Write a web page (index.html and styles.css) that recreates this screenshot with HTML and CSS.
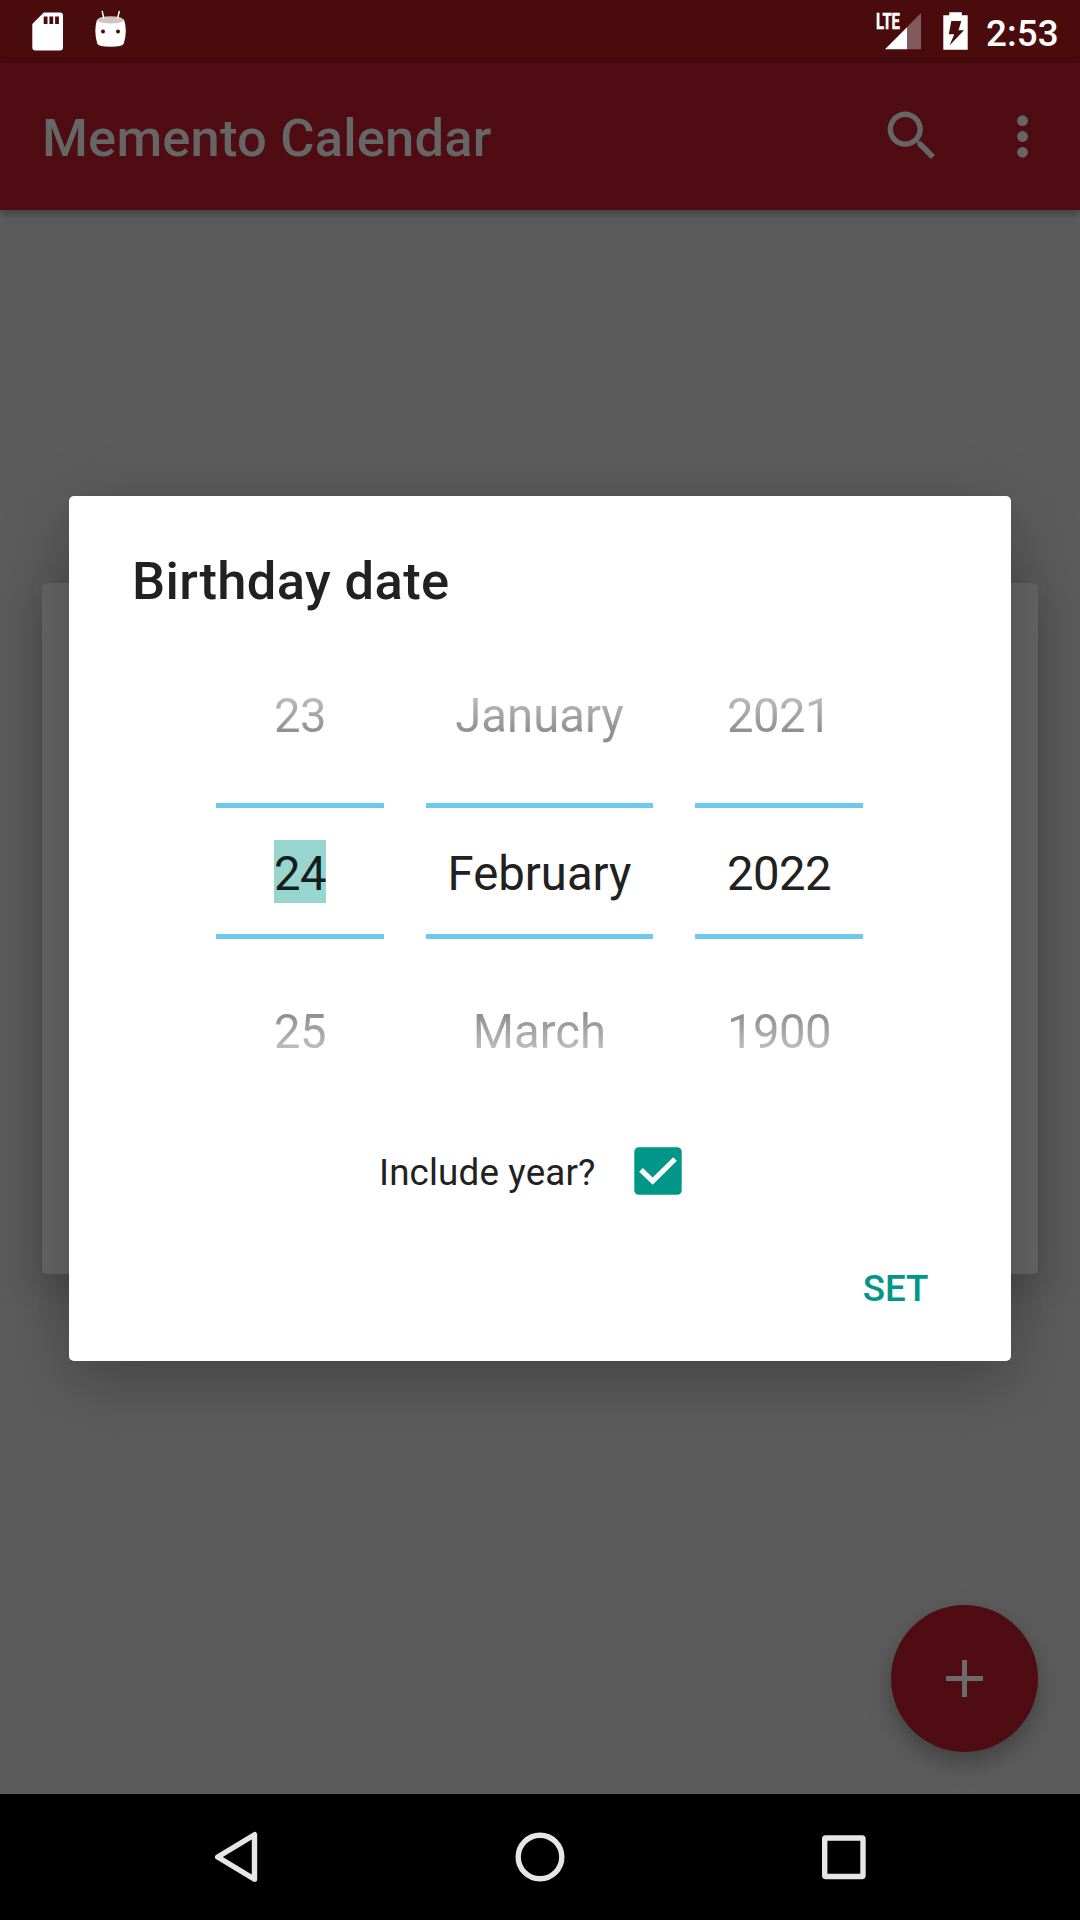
FILE: index.html
```html
<!DOCTYPE html>
<html lang="en">
<head>
<meta charset="utf-8">
<title>Memento Calendar</title>
<link rel="stylesheet" href="styles.css">
</head>
<body>
<div class="screen">
  <header class="status-bar">
    <svg class="status-icons" width="140" height="63" viewBox="0 0 140 63">
      <path fill="#fff" fill-rule="evenodd" d="M43.8 12.4H60a3 3 0 0 1 3 3V47.6a3 3 0 0 1-3 3H35.300a3 3 0 0 1-3-3V24zM43.700 16.500V24H47.500V16.500zM49.400 16.500V24H53.200V16.500zM55.100 16.500V24H58.900V16.500z"/>
      <path fill="#fff" d="M97 19.500Q110.300 26 124 19.500Q127.800 31 123.800 43.500Q122.500 46.800 110.500 46.800Q98.500 46.800 97.200 43.500Q93.500 31 97 19.500z"/>
      <ellipse cx="110.500" cy="19.900" rx="12.800" ry="3.600" fill="#d2c2c2"/>
      <path d="M102.300 11.600L103.700 18M119.200 11.600L117.700 18" stroke="#fff" stroke-width="1.500" stroke-linecap="round"/>
      <circle cx="103" cy="31.500" r="2" fill="#4a0b0d"/>
      <circle cx="118" cy="31.500" r="2" fill="#4a0b0d"/>
    </svg>
    <svg class="status-icons status-right" width="104" height="63" viewBox="870 0 104 63">
      <text class="network" x="876" y="29" textLength="24" lengthAdjust="spacingAndGlyphs">LTE</text>
      <path fill="#835a5c" d="M907 27L921 13V49.300H907z"/>
      <path fill="#fff" d="M885 49.300L907 27.300V49.300z"/>
      <path fill="#fff" fill-rule="evenodd" d="M943.300 15.200H949.300V12.300H961.800V15.200H967.700V49.700H943.300zM951.300 21L948.800 34.200H954.300L949.500 45.600L964 30.200H958.500L961.300 21z"/>
    </svg>
    <span class="clock">2:53</span>
  </header>
  <div class="app-bar">
    <h1 class="app-title">Memento Calendar</h1>
    <svg width="200" height="147" viewBox="880 63 200 147" fill="#666">
      <path transform="translate(879.500 103.500) scale(2.708)" d="M15.500 14h-.790l-.280-.270A6.471 6.471 0 0 0 16 9.500 6.500 6.500 0 1 0 9.500 16c1.610 0 3.090-.590 4.230-1.570l.270.280v.790l5 4.990L20.490 19l-4.990-5zm-6 0C7.010 14 5 11.990 5 9.500S7.010 5 9.500 5 14 7.010 14 9.500 11.990 14 9.500 14z"/>
      <circle cx="1022.500" cy="120.700" r="5.400"/>
      <circle cx="1022.500" cy="136.500" r="5.400"/>
      <circle cx="1022.500" cy="152.300" r="5.400"/>
    </svg>
  </div>
  <main class="content">
    <div class="card"></div>
    <div class="fab">
      <svg width="37" height="37" viewBox="0 0 37 37"><path fill="#6b6b6b" d="M16 0H21V16H37V21H21V37H16V21H0V16H16z"/></svg>
    </div>
  </main>
  <nav class="nav-bar">
    <svg width="1080" height="126" viewBox="0 1794 1080 126" fill="none" stroke="#e6e6e6" stroke-width="5.400" stroke-linejoin="round">
      <path d="M217.700 1857L254.500 1834.700V1879.200z"/>
      <circle cx="540" cy="1857" r="21.800"/>
      <rect x="824.700" y="1838" width="38.300" height="38.500" rx="1"/>
    </svg>
  </nav>
  <section class="dialog">
    <h2 class="dialog-title">Birthday date</h2>
    <div class="pickers">
      <div class="picker">
        <div class="option previous digits">23</div>
        <div class="current digits"><span class="selected">24</span></div>
        <div class="option next digits">25</div>
      </div>
      <div class="picker month">
        <div class="option previous">January</div>
        <div class="current">February</div>
        <div class="option next">March</div>
      </div>
      <div class="picker">
        <div class="option previous digits">2021</div>
        <div class="current digits">2022</div>
        <div class="option next digits">1900</div>
      </div>
    </div>
    <div class="include-year">
      <span class="include-label">Include year?</span>
      <svg width="48" height="48" viewBox="0 0 48 48"><rect x=".3" y=".3" width="47.400" height="47.400" rx="4.500" fill="#009688"/><path d="M7 22.800L18.700 34.200L41 12" fill="none" stroke="#fff" stroke-width="5.200"/></svg>
    </div>
    <div class="actions"><span class="set">SET</span></div>
  </section>
</div>
</body>
</html>
```
FILE: styles.css
```css
* { box-sizing: border-box; }
body { margin: 0; font-family: Roboto, sans-serif; }
svg { display: block; flex: none; }
.screen {
  position: relative;
  display: flex;
  flex-direction: column;
  width: 1080px;
  height: 1920px;
  overflow: hidden;
  background: #5c5c5c;
}
.status-bar {
  display: flex;
  height: 63px;
  background: #4a0b0d;
}
.status-right { margin-left: 730px; }
.network { font: 700 22.5px Roboto, sans-serif; fill: #fff; stroke: #fff; stroke-width: .5px; }
.clock {
  margin-left: 12px;
  padding-top: 2px;
  font-size: 36.75px;
  font-weight: 500;
  line-height: 63px;
  letter-spacing: .1px;
  color: #fff;
}
.app-bar {
  position: relative;
  display: flex;
  justify-content: space-between;
  height: 147px;
  padding-left: 42px;
  background: #4f0c13;
  box-shadow: 0 3px 9px rgba(0, 0, 0, .35);
}
.app-title {
  margin: 0;
  padding-top: 2px;
  font-size: 52.5px;
  font-weight: 500;
  line-height: 147px;
  letter-spacing: .18px;
  color: #666;
}
.content {
  display: flex;
  flex-direction: column;
  height: 1584px;
  padding: 373px 42px 42px;
}
.card {
  height: 691px;
  border-radius: 5px;
  background: #666;
  box-shadow: 0 14px 46px rgba(0, 0, 0, .24);
}
.fab {
  display: flex;
  align-items: center;
  justify-content: center;
  align-self: flex-end;
  width: 147px;
  height: 147px;
  margin-top: auto;
  border-radius: 50%;
  background: #4f0c13;
  box-shadow: 0 10px 24px rgba(0, 0, 0, .3);
}
.nav-bar { position: relative; height: 126px; background: #000; }
.dialog {
  position: absolute;
  top: 496px;
  left: 69px;
  width: 942px;
  height: 865px;
  padding: 50px 63px 0;
  border-radius: 5px;
  background: #fff;
  color: #212121;
  box-shadow: 0 18px 66px rgba(0, 0, 0, .28);
}
.dialog-title {
  margin: 0;
  font-size: 52.5px;
  font-weight: 500;
  line-height: 70px;
  letter-spacing: .37px;
}
.pickers {
  display: flex;
  justify-content: center;
  gap: 42px;
  margin-top: 21px;
  padding-right: 1px;
  font-size: 47.25px;
  text-align: center;
}
.picker { width: 168px; }
.month { width: 227px; }
.digits { letter-spacing: -.5px; }
.option {
  height: 158px;
  line-height: 158px;
  color: transparent;
  -webkit-background-clip: text;
  background-clip: text;
}
.previous {
  margin-bottom: 8px;
  background-image: linear-gradient(#bbb 61px, #8f8f8f 95px);
}
.next {
  margin-top: 14px;
  background-image: linear-gradient(#8f8f8f 61px, #bcbcbc 95px);
}
.current {
  height: 136px;
  padding-top: 6px;
  border-top: 5px solid #6dcaec;
  border-bottom: 5px solid #6dcaec;
  line-height: 120px;
}
.selected {
  display: inline-block;
  height: 63px;
  line-height: 68px;
  background: #99d5cf;
  color: #141e1d;
}
.include-year {
  display: flex;
  align-items: center;
  gap: 39px;
  height: 48px;
  margin: 36px 0 0 247px;
  font-size: 36.75px;
}
.include-label { width: 216px; padding-top: 3px; line-height: 45px; letter-spacing: .16px; white-space: nowrap; }
.actions {
  display: flex;
  justify-content: flex-end;
  margin: 72px 19.5px 0 0;
  font-size: 36.75px;
  font-weight: 500;
  line-height: 43px;
  color: #009688;
}
```
